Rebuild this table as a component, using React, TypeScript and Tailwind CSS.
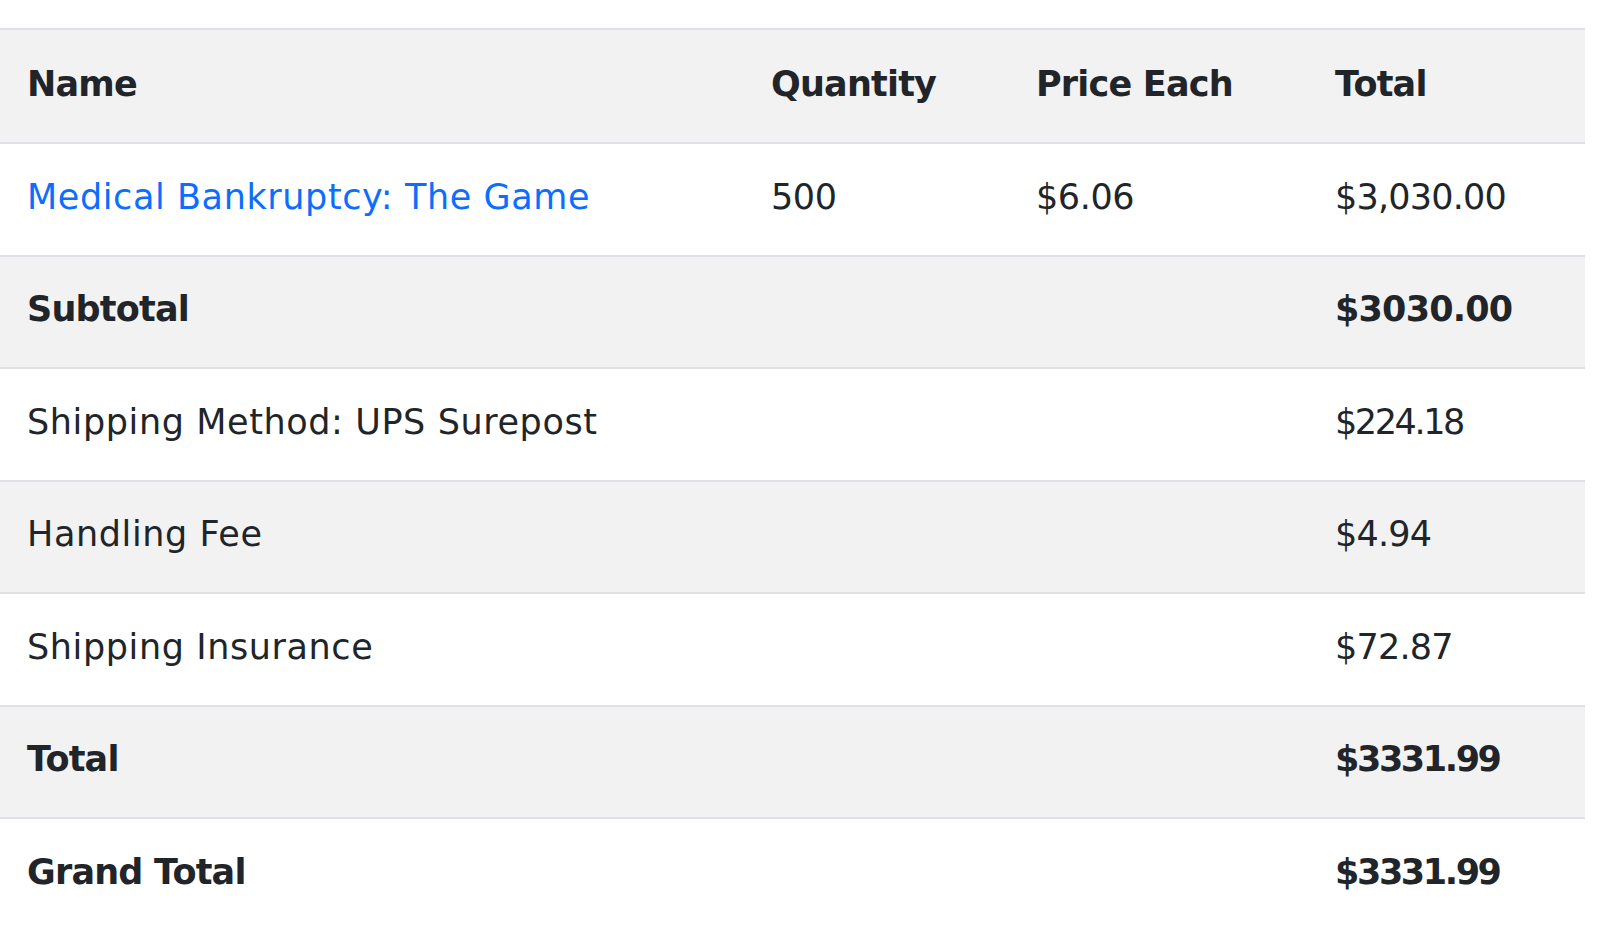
import React from "react";

const rows: { name: string; link?: boolean; qty?: string; price?: string; total: string; bold?: boolean; gray?: boolean; tight?: boolean }[] = [
  { name: "Medical Bankruptcy: The Game", link: true, qty: "500", price: "$6.06", total: "$3,030.00" },
  { name: "Subtotal", total: "$3030.00", bold: true, gray: true },
  { name: "Shipping Method: UPS Surepost", total: "$224.18", tight: true },
  { name: "Handling Fee", total: "$4.94", gray: true },
  { name: "Shipping Insurance", total: "$72.87" },
  { name: "Total", total: "$3331.99", bold: true, gray: true, tight: true },
  { name: "Grand Total", total: "$3331.99", bold: true, tight: true },
];

export default function App() {
  return (
    <div className="w-[1600px] h-[932px] bg-white overflow-hidden pt-[28px] text-[#212529]" style={{ fontFamily: '"DejaVu Sans", "Noto Sans", sans-serif' }}>
      <table className="w-[1585px] border-collapse table-fixed text-[35px] leading-none">
        <colgroup>
          <col className="w-[744px]" />
          <col className="w-[265px]" />
          <col className="w-[299px]" />
          <col />
        </colgroup>
        <thead>
          <tr className="bg-[#f2f2f2] h-[114px] border-t-2 border-b-2 border-[#dee2e6]">
            <th className="text-left font-bold tracking-[-0.8px] pl-[27px] pb-[4px]">Name</th>
            <th className="text-left font-bold tracking-[-0.8px] pl-[27px] pb-[4px]">Quantity</th>
            <th className="text-left font-bold tracking-[-0.8px] pl-[27px] pb-[4px]">Price Each</th>
            <th className="text-left font-bold tracking-[-0.8px] pl-[27px] pb-[4px]">Total</th>
          </tr>
        </thead>
        <tbody>
          {rows.map((r, i) => (
            <tr key={i} className={`h-[112.5px] ${i < rows.length - 1 ? "border-b-2 border-[#dee2e6]" : ""} ${r.gray ? "bg-[#f2f2f2]" : "bg-white"}`}>
              <td className={`pl-[27px] pb-[4px] ${r.bold ? "font-bold tracking-[-0.8px]" : "tracking-[0.6px]"} ${r.link ? "text-[#0d6efd]" : ""}`}>{r.name}</td>
              <td className="pl-[27px] pb-[4px] tracking-[-0.4px]">{r.qty ?? ""}</td>
              <td className="pl-[27px] pb-[4px] tracking-[-0.4px]">{r.price ?? ""}</td>
              <td className={`pl-[27px] pb-[4px] ${r.tight ? "tracking-[-2.4px]" : "tracking-[-0.8px]"} ${r.bold ? "font-bold" : ""}`}>{r.total}</td>
            </tr>
          ))}
        </tbody>
      </table>
    </div>
  );
}
